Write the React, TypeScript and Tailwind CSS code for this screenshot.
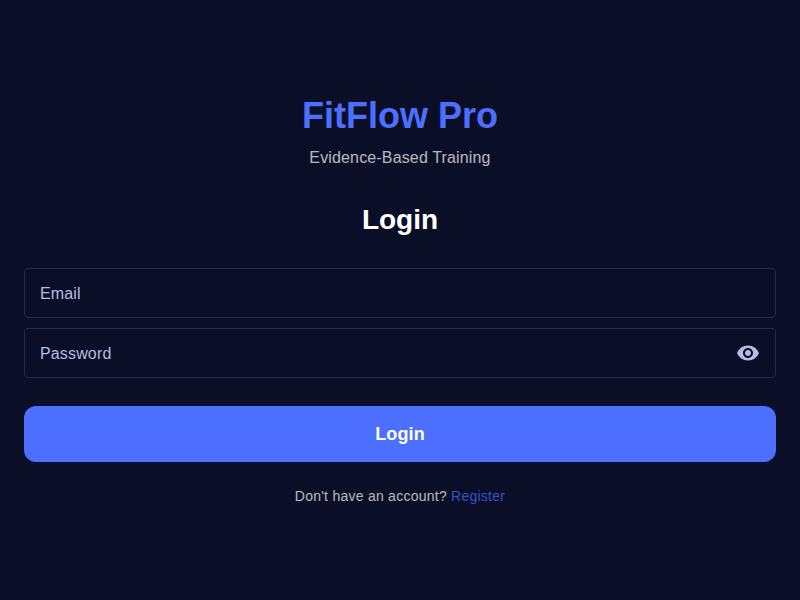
import { MdVisibility } from "react-icons/md";

function Field({ label, secure = false }: { label: string; secure?: boolean }) {
  return (
    <div className="flex h-[50px] items-center justify-between rounded border border-[#262b49] px-[15px] text-base tracking-[0.15px] text-[#b8bde0]">
      <span className="pt-0.5">{label}</span>
      {secure && <MdVisibility className="size-6" />}
    </div>
  );
}

export default function App() {
  return (
    <main className="flex h-screen flex-col justify-center bg-[#0a0e27] px-6 font-['Liberation_Sans',Arial,sans-serif]">
      <h1 className="text-center text-4xl leading-[44px] font-bold text-[#4c6fff]">FitFlow Pro</h1>
      <p className="mt-2 text-center text-base leading-6 tracking-[0.15px] text-white opacity-70">Evidence-Based Training</p>
      <h2 className="mt-8 text-center text-[28px] leading-9 font-bold text-white">Login</h2>
      <div className="mt-[30px] flex flex-col gap-2.5">
        <Field label="Email" />
        <Field label="Password" secure />
      </div>
      <button className="mt-7 h-14 rounded-xl bg-[#4c6fff] text-lg font-bold tracking-[0.1px] text-white">Login</button>
      <p className="mt-6 text-center text-sm leading-5 tracking-[0.25px] text-white opacity-70">
        Don't have an account? <span className="text-[#4c6fff]">Register</span>
      </p>
    </main>
  );
}
